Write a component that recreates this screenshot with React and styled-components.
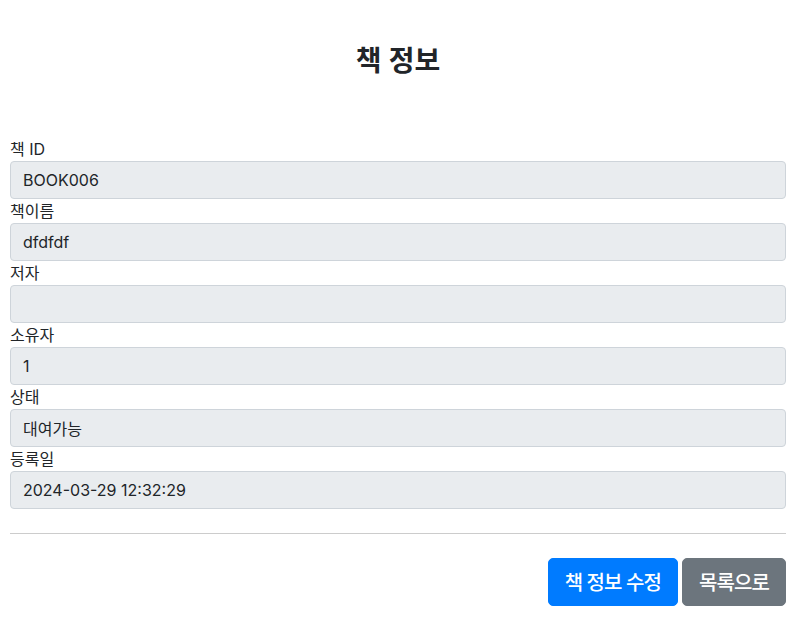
import React from "react";
import styled, { createGlobalStyle } from "styled-components";

const GlobalStyle = createGlobalStyle`
  * { box-sizing: border-box; }
  body {
    margin: 0;
    background: #fff;
    color: #212529;
    font-family: Inter, "Noto Sans CJK KR", sans-serif;
    font-size: 16px;
    line-height: 1.5;
  }
`;

const Page = styled.div`
  width: 776px;
  margin-left: 10px;
  padding-top: 45px;
`;

const Title = styled.h3`
  margin: 0 0 58px;
  font-size: 28px;
  font-weight: 600;
  line-height: 1.2;
  text-align: center;
`;

const Field = styled.div`
  display: flex;
  flex-direction: column;
`;

const Label = styled.label`
  font-size: 16px;
  line-height: 24px;
`;

const Input = styled.input`
  height: 38px;
  padding: 6px 12px;
  border: 1px solid #ced4da;
  border-radius: 4px;
  background: #e9ecef;
  color: #212529;
  font-family: inherit;
  font-size: 16px;
`;

const Divider = styled.hr`
  margin: 24px 0;
  border: 0;
  border-top: 1px solid #ccc;
`;

const Actions = styled.div`
  display: flex;
  justify-content: flex-end;
  gap: 4px;
`;

const Button = styled.button`
  height: 48px;
  padding: 0 16px;
  border: 1px solid ${(p) => p.$bg};
  border-radius: 5px;
  background: ${(p) => p.$bg};
  color: #fff;
  font-family: inherit;
  font-size: 20px;
  font-weight: 500;
  letter-spacing: -0.9px;
`;

const fields = [
  ["책 ID", "BOOK006"],
  ["책이름", "dfdfdf"],
  ["저자", ""],
  ["소유자", "1"],
  ["상태", "대여가능"],
  ["등록일", "2024-03-29 12:32:29"],
];

export default function App() {
  return (
    <>
      <GlobalStyle />
      <Page>
        <Title>책 정보</Title>
        {fields.map(([label, value]) => (
          <Field key={label}>
            <Label>{label}</Label>
            <Input value={value} readOnly />
          </Field>
        ))}
        <Divider />
        <Actions>
          <Button $bg="#007bff">책 정보 수정</Button>
          <Button $bg="#6c757d">목록으로</Button>
        </Actions>
      </Page>
    </>
  );
}
